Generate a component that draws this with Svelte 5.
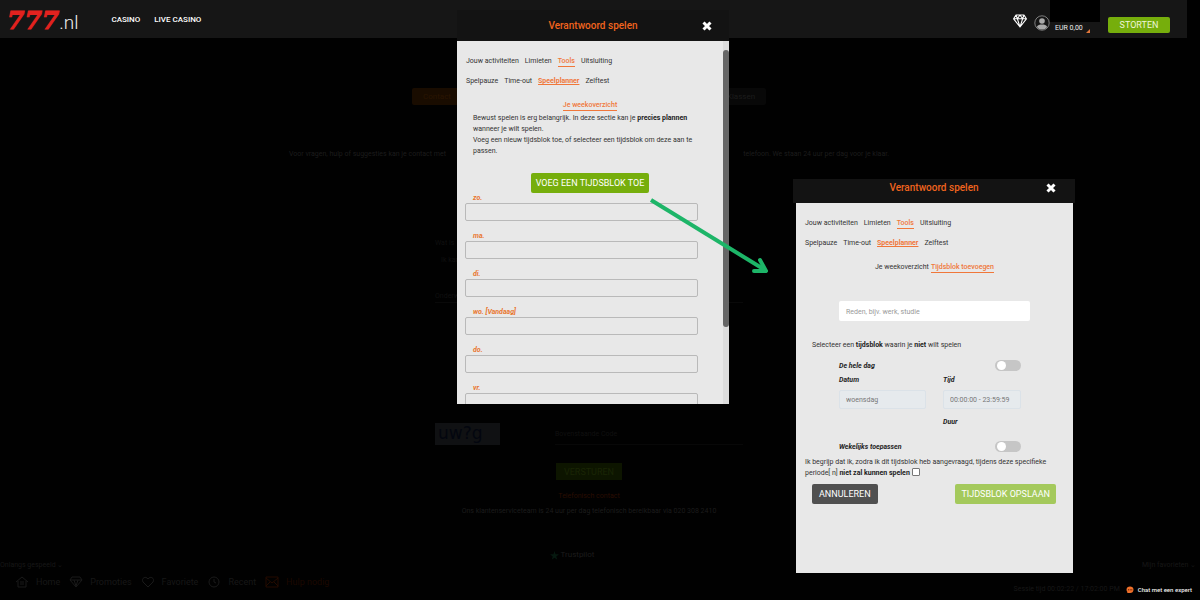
<script>
  const days = ['zo.', 'ma.', 'di.', 'wo. [Vandaag]', 'do.', 'vr.']
  const sections = ['Jouw activiteiten', 'Limieten', 'Tools', 'Uitsluiting']
  const tools = ['Spelpauze', 'Time-out', 'Speelplanner', 'Zelftest']

  let reason = $state('')
  let wholeDay = $state(false)
  let weekly = $state(false)
  let agreed = $state(false)
</script>

{#snippet cross()}
  <svg viewBox="0 0 10 10" width="10" height="10" aria-hidden="true">
    <path d="M1.500 1.500 8.500 8.500M8.500 1.500 1.500 8.500" stroke="#fff" stroke-width="3" />
  </svg>
{/snippet}

{#snippet tabs()}
  <nav class="tabs">
    {#each sections as s}
      <a href="#sectie" class:active={s === 'Tools'}>{s}</a>
    {/each}
  </nav>
  <nav class="tabs">
    {#each tools as t}
      <a href="#tool" class:current={t === 'Speelplanner'}>{t}</a>
    {/each}
  </nav>
{/snippet}

<div class="page">
  <header class="topbar">
    <a class="logo" href="#home"><b>777</b><span>.nl</span></a>
    <nav class="mainnav">
      <a href="#casino">CASINO</a>
      <a href="#live">LIVE CASINO</a>
    </nav>
    <div class="account">
      <svg class="gem" viewBox="0 0 14 14" width="14" height="14" fill="none" stroke="#fff" stroke-width="1.1" stroke-linejoin="round">
        <path d="M3 1h8l2.4 3.8L7 13 .6 4.8zM.6 4.8h12.8M3 1l1.4 3.8L7 13l2.6-8.2L11 1M4.4 4.8 7 1l2.6 3.8" />
      </svg>
      <svg class="avatar" viewBox="0 0 16 16" width="16" height="16">
        <circle cx="8" cy="8" r="7.2" fill="#161616" stroke="#999" stroke-width=".8" />
        <circle cx="8" cy="6" r="2.8" fill="#aaa" />
        <path d="M2.8 12c.8-2 2.8-2.4 5.2-2.4s4.400.4 5.200 2.400A6.500 6.500 0 0 1 2.800 12z" fill="#aaa" />
      </svg>
      <div class="wallet">
        <div class="mask"></div>
        <div class="balance">
          <span>EUR 0,00</span>
          <svg viewBox="0 0 4 4" width="4" height="4"><path d="M4 0v4H0z" fill="#e0763a" /></svg>
        </div>
      </div>
      <button class="deposit">STORTEN</button>
    </div>
  </header>

  <main class="backdrop">
    <div class="pills">
      <a class="hot" href="#contact">Contact</a>
      <a href="#klachten">Klassen</a>
    </div>
    <p class="intro">
      <span>Voor vragen, hulp of suggesties kan je contact met</span>
      <span>telefoon. We staan 24 uur per dag voor je klaar.</span>
    </p>
    <form class="contact">
      <p>Wat is</p>
      <p class="inset">Ik kan</p>
      <p class="line">Onderwerp</p>
      <div class="captcha">
        <span class="code">uw?g</span>
        <input aria-label="Beveiligingscode" placeholder="Bovenstaande Code" />
      </div>
      <button type="button">VERSTUREN</button>
    </form>
    <a class="phone" href="#telefoon">Telefonisch contact</a>
    <p>Ons klantenserviceteam is 24 uur per dag telefonisch bereikbaar via 020 308 2410</p>
    <p class="trust">
      <svg viewBox="0 0 10 10" width="9" height="9"><path d="M5 0l1.200 3.700H10L7 6l1.100 3.700L5 7.500 1.900 9.700 3 6 0 3.700h3.800z" fill="#06180f" /></svg>
      Trustpilot
    </p>
  </main>

  <footer>
    <div class="lists">
      <span>Onlangs gespeeld ⌄</span>
      <span>Mijn favorieten ⌄</span>
    </div>
    <div class="bottom">
      <nav>
        <a href="#home">
          <svg viewBox="0 0 14 12"><path d="M1 6 7 1l6 5M3 5v6h8V5M5 6h4M5 8h4" /></svg>
          Home
        </a>
        <a href="#promoties">
          <svg viewBox="0 0 14 12"><path d="M3 1h8l2 3-6 7-6-7zM1 4h12M5 4l2 6 2-6" /></svg>
          Promoties
        </a>
        <a href="#favoriete">
          <svg viewBox="0 0 14 12"><path d="M7 11 2 6C0 3 4-1 7 3c3-4 7 0 5 3z" /></svg>
          Favoriete
        </a>
        <a href="#recent">
          <svg viewBox="0 0 14 12"><circle cx="7" cy="6" r="5" /><path d="M7 3v3l2 1" /></svg>
          Recent
        </a>
        <a class="help" href="#hulp">
          <svg viewBox="0 0 14 12"><path d="M1 1h12v10H1zM1 2l6 5 6-5M1 10l4-4M13 10 9 6" /></svg>
          Hulp nodig
        </a>
      </nav>
      <div class="status">
        <span>Sessie tijd 00:02:22 / 17:02:00 PM</span>
        <a class="chat" href="#chat">
          <svg viewBox="0 0 8 8" width="8" height="8">
            <path d="M4 .5c2 0 3.500 1.200 3.500 3.200S6 7 4 7H1.200l.2-1.100C.8 5.300.5 4.600.5 3.700.5 1.700 2 .5 4 .5z" fill="#f0702a" />
            <path d="M2 3.800h1M3.700 3.800h1M5.300 3.800h1" stroke="#5a1c00" />
          </svg>
          Chat met een expert
        </a>
      </div>
    </div>
  </footer>
</div>

<section class="modal overview">
  <div class="head">
    <h2>Verantwoord spelen</h2>
    <button aria-label="Sluiten">{@render cross()}</button>
  </div>
  <div class="scroller">
    <div class="body">
      {@render tabs()}
      <div class="sub"><a class="active" href="#week">Je weekoverzicht</a></div>
      <p class="text">
        Bewust spelen is erg belangrijk. In deze sectie kan je <b>precies plannen</b> wanneer je wilt spelen.<br />
        Voeg een nieuw tijdsblok toe, of selecteer een tijdsblok om deze aan te passen.
      </p>
      <button class="btn add">VOEG EEN TIJDSBLOK TOE</button>
      <div class="days">
        {#each days as day}
          <div class="day">
            <span>{day}</span>
            <div class="slot"></div>
          </div>
        {/each}
      </div>
    </div>
    <div class="track"><div class="thumb"></div></div>
  </div>
</section>

<section class="modal planner">
  <div class="head">
    <h2>Verantwoord spelen</h2>
    <button aria-label="Sluiten">{@render cross()}</button>
  </div>
  <div class="body">
    {@render tabs()}
    <div class="sub">
      <a href="#week">Je weekoverzicht</a>
      <a class="active" href="#toevoegen">Tijdsblok toevoegen</a>
    </div>
    <input class="reason" aria-label="Reden" placeholder="Reden, bijv. werk, studie" bind:value={reason} />
    <p class="hint">Selecteer een <b>tijdsblok</b> waarin je <b>niet</b> wilt spelen</p>
    <div class="fields">
      <label class="switch">De hele dag <input type="checkbox" bind:checked={wholeDay} /></label>
      <div class="pair">
        <label>Datum <input value="woensdag" readonly /></label>
        <label>Tijd <input value="00:00:00 - 23:59:59" readonly /></label>
        <span class="duration">Duur</span>
      </div>
      <label class="switch">Wekelijks toepassen <input type="checkbox" bind:checked={weekly} /></label>
    </div>
    <label class="agree">
      Ik begrijp dat ik, zodra ik dit tijdsblok heb aangevraagd, tijdens deze specifieke periode[ n] <b>niet zal kunnen spelen</b>
      <input type="checkbox" bind:checked={agreed} />
    </label>
    <div class="actions">
      <button class="btn cancel">ANNULEREN</button>
      <button class="btn save">TIJDSBLOK OPSLAAN</button>
    </div>
  </div>
</section>

<svg class="arrow" viewBox="0 0 130 90" width="130" height="90" fill="none" stroke="#1db568" stroke-width="4" aria-hidden="true">
  <path d="M6 10 120 80" />
  <path d="M115 70 121 81 109 81" stroke-linecap="round" stroke-linejoin="round" />
</svg>

<style>
  :global(body) { margin: 0; background: #000; }
  :global(#app) { position: relative; font: 7px/10px Roboto, 'Liberation Sans', sans-serif; }
  :global(#app *) { box-sizing: border-box; }
  p, h2 { margin: 0; }
  a { color: inherit; text-decoration: none; }
  button, input { font: inherit; border: 0; padding: 0; margin: 0; }
  button { cursor: pointer; }
  svg { display: block; }

  .page { min-height: 100vh; display: flex; flex-direction: column; background: #010101; color: #1c1c1c; }

  .topbar { height: 38px; margin-right: 13px; padding: 0 17px 0 7px; display: flex; align-items: center; background: #161616; color: #eee; }
  .logo { display: flex; align-items: baseline; line-height: 24px; padding-top: 6px; }
  .logo b { font: italic bold 25px/24px 'DejaVu Serif', serif; color: #e3221f; -webkit-text-stroke: 1px #e3221f; }
  .logo span { font-size: 19px; font-weight: 300; }
  .mainnav { display: flex; gap: 14px; margin-left: 33px; font-size: 8px; font-weight: 500; color: #fff; padding-top: 2px; }
  .account { margin-left: auto; align-self: stretch; display: flex; align-items: flex-start; }
  .gem { margin-top: 14px; }
  .avatar { margin: 15px 0 0 7px; }
  .mask { width: 50px; height: 22px; background: #000; }
  .balance { display: flex; align-items: flex-end; justify-content: space-between; padding: 1px 10px 0 5px; white-space: nowrap; }
  .deposit { width: 62px; height: 16px; margin: 17px 0 0 8px; border-radius: 2px; background: #76ae0c; color: #eef5d8; font-size: 9px; }

  .backdrop { margin-right: 22px; display: flex; flex-direction: column; align-items: center; }
  .pills { width: 354px; margin-top: 50px; display: flex; justify-content: space-between; font-size: 8px; line-height: 17px; text-align: center; }
  .pills a { width: 50px; border-radius: 2px; background: #080808; }
  .pills .hot { background: #190c00; color: #2a1500; }
  .intro { width: 600px; margin-top: 44px; display: flex; justify-content: space-between; }
  .contact { width: 308px; margin-top: 79px; display: flex; flex-direction: column; }
  .contact p { margin-bottom: 7px; color: #101010; }
  .contact .inset { padding-left: 6px; margin-bottom: 25px; }
  .contact .line { border-bottom: 1px solid #090909; line-height: 12px; }
  .captcha { display: flex; gap: 55px; margin-top: 113px; }
  .code { width: 65px; height: 22px; padding-left: 3px; background: #101113; color: #03060f; font: 17px/20px 'DejaVu Sans', sans-serif; }
  .captcha input { flex: 1; min-width: 0; background: none; border-bottom: 1px solid #080808; }
  .captcha input::placeholder { color: #101010; }
  .contact button { align-self: center; width: 66px; height: 17px; margin-top: 18px; background: #0d1500; color: #1a2505; font-size: 9px; }
  .phone { margin: 11px 0 5px; color: #2a0d02; }
  .trust { display: flex; align-items: center; gap: 2px; margin-top: 34px; padding-right: 34px; font-size: 8px; }

  footer { margin-top: auto; color: #171717; }
  .lists { display: flex; justify-content: space-between; padding-right: 4px; }
  .bottom { display: flex; justify-content: space-between; align-items: flex-start; height: 30px; padding: 6px 8px 0 15px; }
  .bottom nav { display: flex; gap: 9px; font-size: 9px; line-height: 12px; }
  .bottom nav a { display: flex; gap: 7px; }
  .bottom nav svg { width: 14px; height: 12px; fill: none; stroke: #1a1a1a; }
  .bottom .help { color: #1c0800; }
  .bottom .help svg { stroke: #240b00; }
  .status { display: flex; gap: 6px; padding-top: 7px; align-items: center; }
  .chat { display: flex; align-items: center; gap: 4px; padding-top: 2px; color: #eee; font-size: 6px; font-weight: 500; }

  .modal { position: absolute; color: #333; }
  .overview { top: 10px; left: calc(50% - 143px); width: 272px; }
  .planner { top: 179px; left: calc(50% + 193px); width: 282px; }
  .head { display: grid; grid-template-columns: 1fr auto 1fr; align-items: center; height: 31px; background: #131313; }
  .head h2 { grid-column: 2; font-size: 10px; line-height: 12px; font-weight: 500; color: #f0641e; }
  .head button { justify-self: end; margin-right: 17px; background: none; }
  .planner .head { height: 24px; padding-bottom: 6px; }
  .planner .head button { margin-right: 19px; }
  .scroller { display: flex; height: 363px; background: #e8e8e8; }
  .body { flex: 1; min-width: 0; padding: 15px 9px 0; overflow: hidden; background: #e8e8e8; }
  .planner .body { margin: 0 2px 0 3px; padding-bottom: 69px; }
  .track { width: 6px; background: #dcdcdc; }
  .thumb { height: 277px; margin-top: 9px; border-radius: 3px; background: #666; }

  .tabs { display: flex; gap: 6px; height: 12px; margin-bottom: 8px; }
  .tabs a { height: 11px; white-space: nowrap; }
  .tabs .active, .sub .active { color: #f0773a; font-weight: 500; border-bottom: 1px solid #f0773a; }
  .tabs .current { color: #f0773a; font-weight: 700; text-decoration: underline; }
  .sub { display: flex; justify-content: center; gap: 2px; height: 12px; margin-top: 12px; }
  .sub a { height: 11px; }
  .text { margin: 1px 14px 0 7px; line-height: 11px; }
  b { color: #1c1c1c; }

  .btn { height: 20px; padding: 0 7px; border-radius: 2px; font-size: 9px; color: #fff; white-space: nowrap; }
  .add { display: block; margin: 16px auto 0; padding: 0 5px; background: #76ae0c; }
  .days { display: flex; flex-direction: column; gap: 10px; margin-right: 16px; margin-left: -1px; }
  .day span { display: block; padding-left: 8px; font-style: italic; font-weight: 700; color: #e8762f; }
  .slot { height: 18px; border: 1px solid #b9b9b9; border-radius: 2px; }

  .reason { display: block; width: 191px; height: 20px; margin: 27px auto 0; padding: 2px 7px 0; border-radius: 2px; background: #fff; }
  .reason::placeholder { color: #999; }
  .hint { margin: 19px 0 10px 7px; }
  .fields { width: 182px; margin-left: 34px; font-style: italic; font-weight: 700; color: #222; }
  .switch { display: flex; justify-content: space-between; align-items: center; height: 11px; }
  .switch input { appearance: none; width: 26px; height: 11px; padding: 1px 2px; border-radius: 6px; background: #c6c6c6; }
  .switch input::before { content: ''; display: block; width: 9px; height: 9px; border-radius: 50%; background: #fff; }
  .switch input:checked::before { margin-left: auto; }
  .pair { display: grid; grid-template-columns: 87px 1fr; gap: 8px 17px; margin: 4px 0 14px; }
  .pair input { display: block; width: 100%; height: 19px; margin-top: 5px; padding: 0 6px; border: 1px solid #dbe2e8; border-radius: 2px; background: #e6eaed; color: #777; font-style: normal; font-weight: 400; }
  .duration { grid-column: 2; }
  .agree { display: block; margin-top: 5px; line-height: 11px; }
  .agree input { appearance: none; width: 8px; height: 8px; border: 1px solid #777; border-radius: 1px; background: #fff; vertical-align: -1px; }
  .agree input:checked { background: #76ae0c; }
  .actions { display: flex; justify-content: space-between; margin: 5px 8px 0 7px; }
  .cancel { background: #505050; }
  .save { padding: 0 6px; background: #a4c95c; }

  .arrow { position: absolute; top: 190px; left: calc(50% + 45px); pointer-events: none; }
</style>
